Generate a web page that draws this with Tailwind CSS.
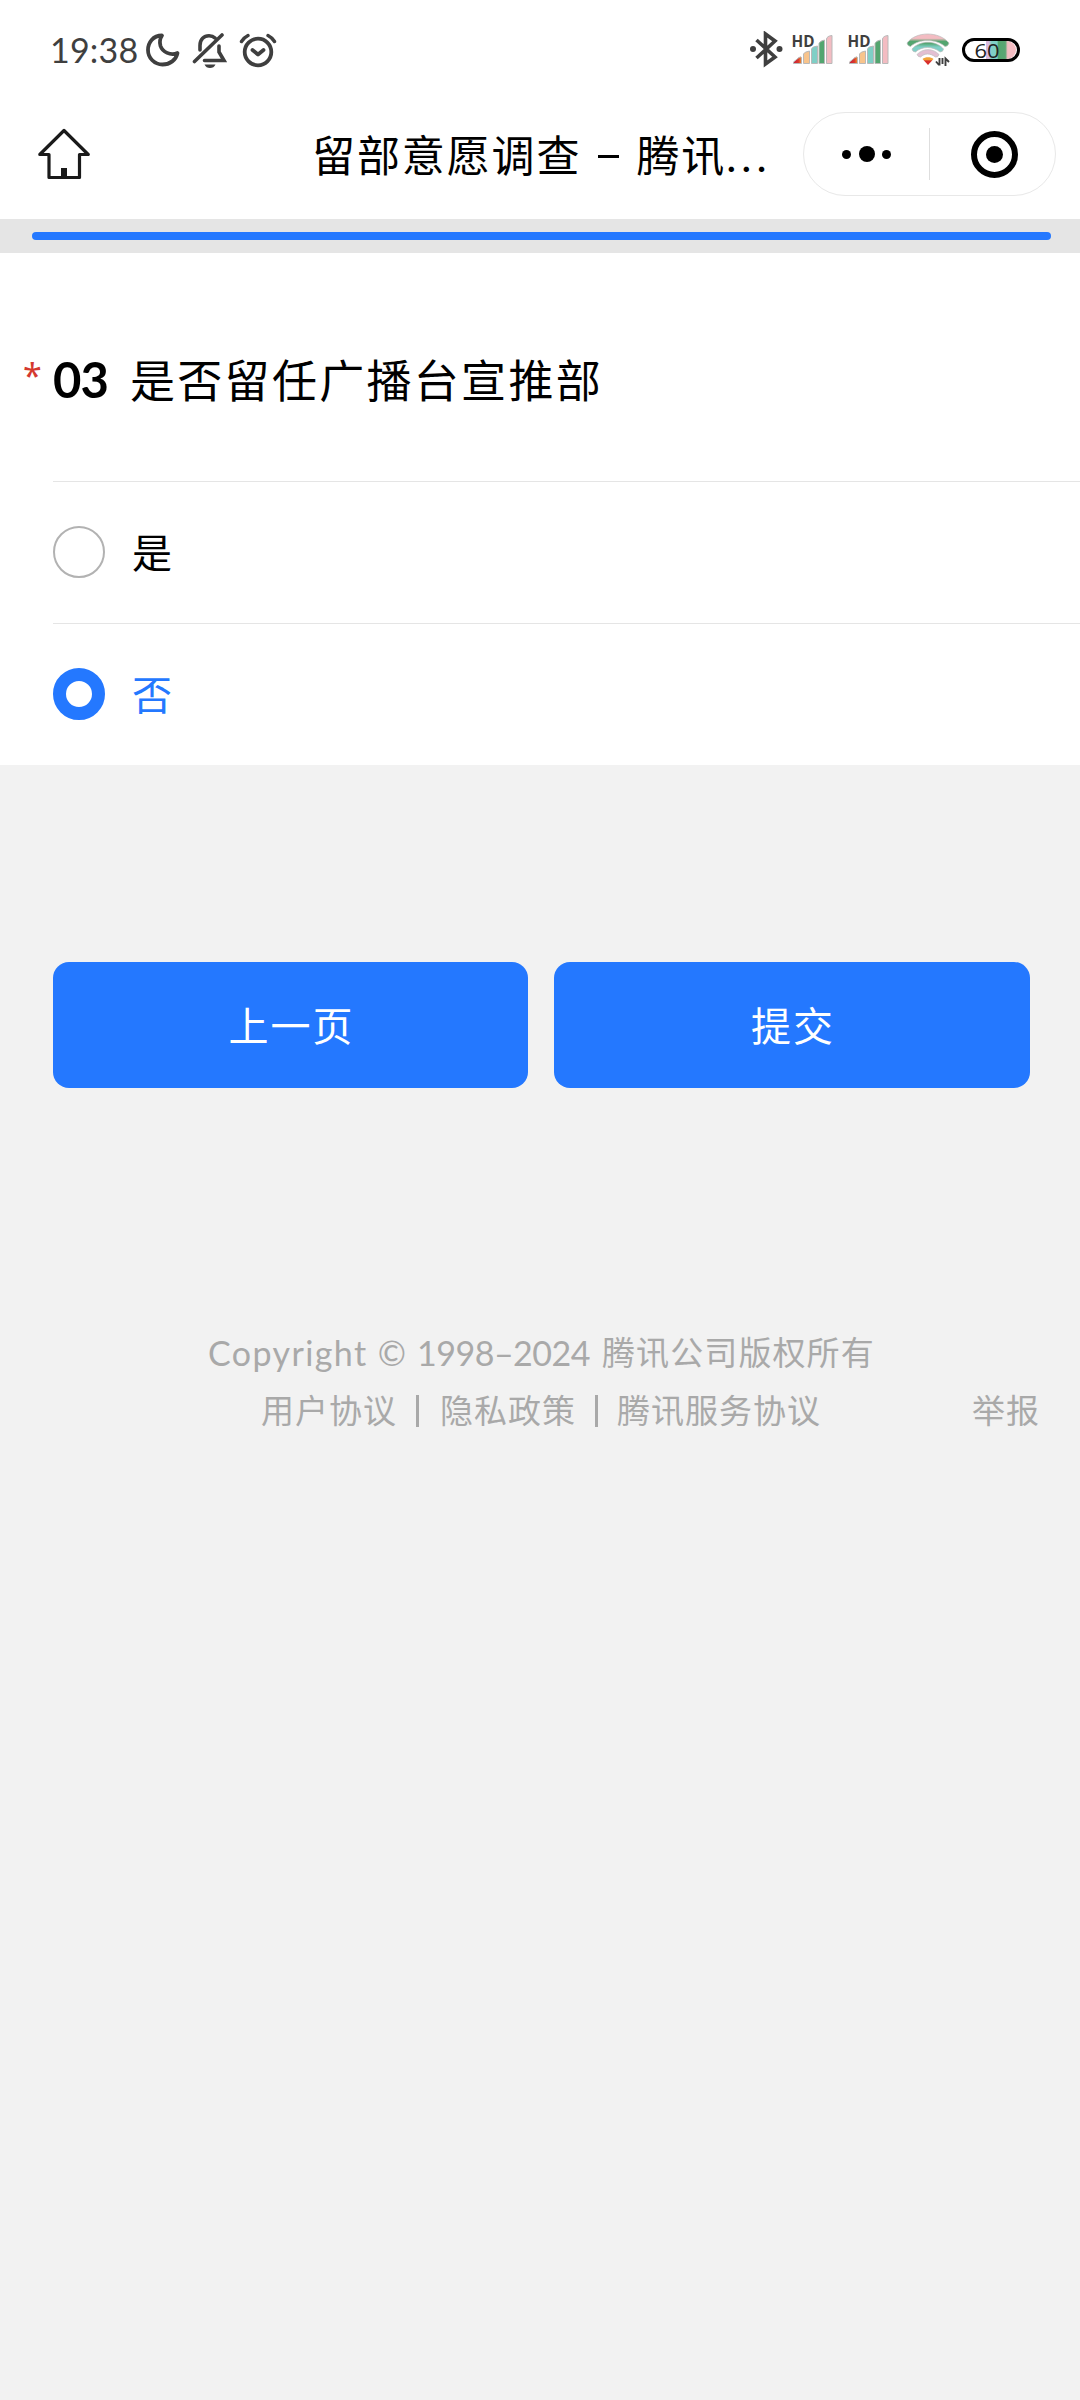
<!DOCTYPE html>
<html lang="zh-CN">
<head>
<meta charset="utf-8">
<title>留部意愿调查</title>
<script src="https://cdn.jsdelivr.net/npm/@tailwindcss/browser@4"></script>
</head>
<body class="w-[1080px] h-[2400px] overflow-hidden bg-[#f2f2f2] text-black font-['Lato','Noto_Sans_CJK_SC',sans-serif]">
<div class="flex flex-col">
  <!-- status bar -->
  <div class="flex h-[100px] items-center justify-between bg-white pl-[50px] pr-[59px]">
    <div class="flex items-center text-[#3f3f3f]">
      <span class="w-[95px] whitespace-nowrap text-[34px] leading-[40px] tracking-[0.2px] font-['Lato']">19:38</span>
      <svg class="h-[36px] w-[36px]" viewBox="0 0 36 36" fill="none" stroke="currentColor" stroke-width="3.8" stroke-linejoin="round"><path d="M17 3.500C8 3.500 3 10.500 3 18a14.500 14.500 0 0 0 14.500 14.500C25 32.500 31 28 32.500 21C25.500 24 17.500 20 15.500 14C14.300 10 15 6.500 17 3.500Z"/></svg>
      <svg class="ml-[11px] h-[36px] w-[36px]" viewBox="0 0 36 36" fill="none" stroke="currentColor" stroke-width="3.600" stroke-linecap="round"><path d="M2.500 29.500L30 3M8 18V13.500C8 7 12 3.800 17 3.800C19.500 3.800 21.500 4.500 23 6M27 14V20L32 28.500H12.500"/><path d="M12.500 32.500H23.500C22.500 35 20.500 36 18 36S13.500 35 12.500 32.500Z" fill="currentColor" stroke="none"/></svg>
      <svg class="ml-[10px] h-[36px] w-[40px]" viewBox="0 0 40 36" fill="none" stroke="currentColor" stroke-width="3.800" stroke-linecap="round" stroke-linejoin="round"><circle cx="20" cy="20" r="13.300"/><path d="M14.500 18L20 22.500L25.500 18"/><path d="M3.500 9.500Q6 5.500 10 3.500M30 3.500Q34 5.500 36.500 9.500" stroke-width="3.400"/></svg>
    </div>
    <div class="flex items-center text-[#3f3f3f]">
      <svg class="h-[38px] w-[34px]" viewBox="0 0 34 38" fill="none" stroke="currentColor" stroke-width="3.600" stroke-linejoin="miter"><path d="M6.500 9L25 26L15.500 33V3L25 10L6.500 27"/><circle cx="3" cy="18" r="3" fill="currentColor" stroke="none"/><circle cx="29.500" cy="18" r="3" fill="currentColor" stroke="none"/></svg>
      <svg class="ml-[8px] h-[46px] w-[42px]" viewBox="0 -7 42 46">
        <defs><linearGradient id="red"><stop offset="0" stop-color="#c8203c"/><stop offset=".6" stop-color="#d9362c"/><stop offset="1" stop-color="#f0952e"/></linearGradient></defs>
        <g stroke="#b9b9b9" stroke-width="1"><path d="M1.500 29.500V28L7 23.500Q9.500 22 9.500 24V29.500Z" fill="url(#red)"/><path d="M11.500 29.500V20Q12 18 17.500 17V29.500Z" fill="#f8c48c"/><path d="M19.500 29.500V15Q20 12.500 25.500 12V29.500Z" fill="#7fcfc6"/><path d="M27 29.500V9.500Q27.500 7 32.500 6V29.500Z" fill="#53a56f"/><path d="M34.500 29.500V5Q35 2 40 1.500V29.500Z" fill="#f3bcc2"/></g>
        <text x="-.5" y="12.500" font-family="Open Sans" font-weight="700" font-size="16" fill="#3f3f3f" textLength="23" lengthAdjust="spacingAndGlyphs">HD</text>
      </svg>
      <svg class="ml-[14px] h-[46px] w-[42px]" viewBox="0 -7 42 46">
        <g stroke="#b9b9b9" stroke-width="1"><path d="M1.500 29.500V28L7 23.500Q9.500 22 9.500 24V29.500Z" fill="url(#red)"/><path d="M11.500 29.500V20Q12 18 17.500 17V29.500Z" fill="#f8c48c"/><path d="M19.500 29.500V15Q20 12.500 25.500 12V29.500Z" fill="#7fcfc6"/><path d="M27 29.500V9.500Q27.500 7 32.500 6V29.500Z" fill="#53a56f"/><path d="M34.500 29.500V5Q35 2 40 1.500V29.500Z" fill="#f3bcc2"/></g>
        <text x="-.5" y="12.500" font-family="Open Sans" font-weight="700" font-size="16" fill="#3f3f3f" textLength="23" lengthAdjust="spacingAndGlyphs">HD</text>
      </svg>
      <svg class="ml-[16px] h-[34px] w-[44px]" viewBox="0 0 44 34" fill="none">
        <defs><linearGradient id="wave" x1="0" y1="0" x2="0" y2="1"><stop offset=".35" stop-color="#f3bcc2"/><stop offset=".6" stop-color="#53a56f"/></linearGradient>
        <linearGradient id="mid" x1="0" y1="0" x2="0" y2="1"><stop offset=".1" stop-color="#53a56f"/><stop offset=".5" stop-color="#7fcfc6"/></linearGradient>
        <linearGradient id="tip" x1="0" y1="0" x2="0" y2="1"><stop offset=".3" stop-color="#f2a43a"/><stop offset=".5" stop-color="#d8302c"/></linearGradient></defs>
        <path d="M1 10C10-2 33-2 43 10Q42 13.500 39 13.500C30 5.500 13 5.500 4.500 13.500Q1.500 13 1 10Z" fill="url(#wave)" stroke="#bbb" stroke-width=".7"/>
        <path d="M6 16C14 7 30 7 37.500 16Q37 19 34 19C27 13 16 13 9.500 19Q6.500 19 6 16Z" fill="url(#mid)" stroke="#bbb" stroke-width=".7"/>
        <path d="M11 21.500C17 15 27 15 33 21.500Q32 24.500 29.500 24C24 20 19 20 14.500 24Q12 24 11 21.500Z" fill="#e3bfd2" stroke="#bbb" stroke-width=".7"/>
        <path d="M16.500 26C19 23.500 25 23.500 27.500 26L22 32Z" fill="url(#tip)"/>
        <path d="M33.500 25V32.500M30 28.500L33 32M36.500 25V31M39.500 33V25.500L43 29" stroke="#3f3f3f" stroke-width="1.900"/>
      </svg>
      <svg class="ml-[11px] h-[26px] w-[60px]" viewBox="0 0 60 26">
        <defs><linearGradient id="cell"><stop offset=".2" stop-color="#fff"/><stop offset=".21" stop-color="#dcb9dc"/><stop offset=".28" stop-color="#dcb9dc"/><stop offset=".36" stop-color="#7fcfc6"/><stop offset=".5" stop-color="#7fcfc6"/><stop offset=".54" stop-color="#53a56f"/><stop offset=".72" stop-color="#5aa673"/><stop offset=".78" stop-color="#f3bcc2"/></linearGradient></defs>
        <path d="M17 4H46A9 9 0 0 1 46 22H17Z" fill="url(#cell)"/>
        <rect x="2.500" y="2.500" width="55" height="21" rx="10.500" fill="none" stroke="#000" stroke-width="3"/>
        <text x="13.500" y="20.500" font-family="Open Sans" font-size="20.500" fill="#222" textLength="25" lengthAdjust="spacingAndGlyphs">60</text>
      </svg>
    </div>
  </div>

  <!-- title bar -->
  <div class="flex h-[119px] items-start bg-white pl-[38px] pr-[24px]">
    <svg class="mt-[28px] h-[52px] w-[52px] shrink-0" viewBox="0 0 52 52" fill="none" stroke="#1a1a1a" stroke-width="3.200" stroke-linejoin="round" stroke-linecap="round"><path d="M26 2.500L50.200 26.500H41.500V49.500H11V26.500H1.800Z"/><path d="M26 40V49" stroke-width="6" stroke-linecap="butt"/></svg>
    <div class="ml-[222px] mt-[23px] flex w-[491px] whitespace-nowrap text-[43px] leading-[66px] tracking-[1.900px]"><span>留部意愿调查</span><span class="ml-[17px] mr-[17px] mt-[32px] h-[3px] w-[21px] bg-black"></span><span>腾讯</span><span class="tracking-[5px]">...</span></div>
    <div class="mt-[12px] flex h-[84px] w-[253px] shrink-0 items-center rounded-full border border-[#e8e8e8]">
      <div class="flex w-[125px] items-center justify-center gap-[7.500px]"><span class="size-[9px] rounded-full bg-black"></span><span class="size-[16px] rounded-full bg-black"></span><span class="size-[9px] rounded-full bg-black"></span></div>
      <span class="h-[52px] w-px bg-[#dedede]"></span>
      <div class="ml-[41px] flex size-[47px] items-center justify-center rounded-full border-[6px] border-black"><span class="size-[17px] rounded-full bg-black"></span></div>
    </div>
  </div>

  <!-- progress -->
  <div class="flex h-[34px] items-center bg-[#e5e5e5] pl-[32px] pr-[29px]"><div class="h-[8px] w-full rounded-full bg-[#2478ff]"></div></div>

  <!-- question -->
  <div class="h-[512px] bg-white">
    <div class="flex h-[228px] items-start pt-[90px]">
      <span class="ml-[23px] mt-[12px] w-[30px] font-['Noto_Sans'] text-[34px] leading-[40px] text-[#d4392f]">*</span>
      <span class="mt-[6px] w-[77px] whitespace-nowrap text-[49px] font-bold leading-[60px] tracking-[-1px]">03</span>
      <h1 class="whitespace-nowrap text-[45px] font-normal leading-[76px] tracking-[2.300px]">是否留任广播台宣推部</h1>
    </div>
    <div class="ml-[53px] flex h-[142px] items-center border-t border-[#e5e5e5]">
      <span class="mb-[1px] size-[52px] rounded-full border-2 border-[#b2b2b2]"></span>
      <span class="ml-[27px] text-[40px] leading-[60px]">是</span>
    </div>
    <div class="ml-[53px] flex h-[142px] items-center border-t border-[#e5e5e5]">
      <span class="mb-[2px] size-[52px] rounded-full border-[13px] border-[#2478ff]"></span>
      <span class="ml-[27px] text-[40px] leading-[60px] text-[#2478ff]">否</span>
    </div>
  </div>

  <!-- actions -->
  <div class="mt-[197px] flex gap-[26px] pl-[53px] pr-[50px] text-[40px] leading-[60px] tracking-[2px] text-white">
    <button class="h-[126px] w-[475px] rounded-[16px] bg-[#2478ff] pt-[2px] pl-[2px]">上一页</button>
    <button class="h-[126px] w-[476px] rounded-[16px] bg-[#2478ff] pt-[2px] pl-[2px]">提交</button>
  </div>

  <!-- footer -->
  <div class="mt-[236px] text-[#a9a9a9]">
    <div class="flex h-[58px] items-center whitespace-nowrap pl-[208px]"><span class="mb-[2px] w-[209px] text-[34px] tracking-[1.400px]">Copyright ©</span><span class="mb-[2px] w-[185px] text-[34px] tracking-[-0.500px]">1998–2024</span><span class="text-[33px] tracking-[1.100px]">腾讯公司版权所有</span></div>
    <div class="flex h-[58px] items-center whitespace-nowrap text-[33px] tracking-[1px]">
      <span class="ml-[261px] w-[155px]">用户协议</span><span class="h-[32px] w-[3px] bg-[#a9a9a9]"></span>
      <span class="ml-[21px] w-[155px]">隐私政策</span><span class="h-[32px] w-[3px] bg-[#a9a9a9]"></span>
      <span class="ml-[19px] w-[355px]">腾讯服务协议</span><span>举报</span>
    </div>
  </div>
</div>
</body>
</html>
